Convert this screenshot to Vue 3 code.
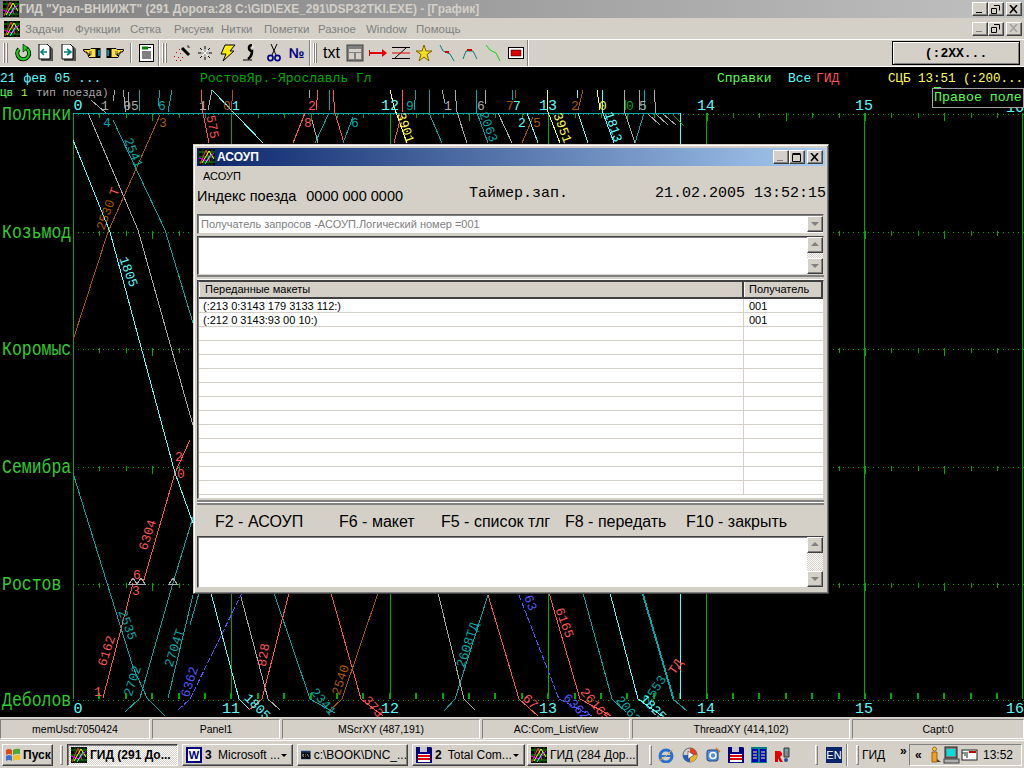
<script setup>
const C = {
  teal: "#00aaaa",
  cyan: "#55ffff",
  gray: "#aaaaaa",
  red: "#ff5555",
  orange: "#aa5500",
  yellow: "#ffff55",
  blue: "#5555ff",
  green: "#00aa00",
};

const menuItems = [
  { t: "Задачи", w: 50 },
  { t: "Функции", w: 55 },
  { t: "Сетка", w: 44 },
  { t: "Рисуем", w: 47 },
  { t: "Нитки", w: 43 },
  { t: "Пометки", w: 54 },
  { t: "Разное", w: 48 },
  { t: "Window", w: 50 },
  { t: "Помощь", w: 50 },
];

const stations = [
  { name: "Полянки", y: 113 },
  { name: "Козьмод", y: 231 },
  { name: "Коромыс", y: 348 },
  { name: "Семибра", y: 466 },
  { name: "Ростов", y: 583 },
  { name: "Деболов", y: 699 },
];

const hourX = [73, 231, 390, 548, 706, 864, 1022];

// ticks every 10 min, longer on the half hour
let tickPath = "";
let thickPath = "";
for (const s of stations) {
  for (let k = 1; k < 36; k++) {
    const x = Math.round(73 + 26.4 * k);
    if (s.y === 699) thickPath += `M${x} 693V699`;
    else tickPath += `M${x} ${s.y}v${k % 3 === 0 ? 8 : 5}`;
  }
}

const lines = [
  // left of the dialog
  [C.gray, "88,113 138,230 183,390 193,425"],
  [C.teal, "113,120 165,230 193,323"],
  [C.cyan, "73,140 110,232 175,473 193,523"],
  [C.orange, "73,340 108,232 160,115"],
  [C.red, "190,440 175,473 143,583"],
  [C.red, "103,698 133,583"],
  [C.teal, "73,473 107,583 133,667 147,698 165,716"],
  [C.teal, "140,698 173,583 193,517"],
  [C.teal, "168,698 193,595"],
  [C.teal, "140,698 125,712"],
  // below the dialog
  [C.teal, "190,625 199,593"],
  [C.cyan, "211,593 239,699 250,710"],
  [C.gray, "241,597 268,699 280,710"],
  [C.teal, "274,593 310,699 335,713"],
  [C.red, "289,593 262,699 249,710"],
  [C.red, "331,593 361,699 383,716"],
  [C.orange, "378,593 342,699 328,712"],
  [C.gray, "438,593 464,699 475,710"],
  [C.teal, "488,595 455,699 444,711"],
  [C.red, "488,595 519,699 538,716"],
  [C.red, "549,593 580,699 611,716"],
  [C.teal, "583,593 612,699 626,712"],
  [C.cyan, "610,593 638,699 662,716"],
  [C.teal, "642,593 673,699 687,711"],
  [C.teal, "643,593 674,699"],
  [C.cyan, "680,113 680,699"],
  // between the axis and the dialog top
  [C.red, "201,90 203,113 209,143"],
  [C.gray, "212,90 208,110"],
  [C.cyan, "212,90 263,143"],
  [C.orange, "233,90 231,112"],
  [C.red, "293,143 305,113"],
  [C.red, "318,90 316,110"],
  [C.gray, "309,90 309,98"],
  [C.gray, "312,120 318,143"],
  [C.teal, "330,90 329,110"],
  [C.teal, "329,113 315,143"],
  [C.red, "333,90 335,113 344,143"],
  [C.teal, "353,117 343,143"],
  [C.yellow, "390,90 394,107 407,143"],
  [C.red, "403,90 402,113 394,143"],
  [C.teal, "416,90 414,110"],
  [C.teal, "429,90 429,113 442,143"],
  [C.gray, "442,90 445,103"],
  [C.gray, "455,90 457,112 467,143"],
  [C.teal, "476,90 477,113 488,143"],
  [C.gray, "485,90 485,104"],
  [C.gray, "498,113 512,143"],
  [C.teal, "512,90 512,100"],
  [C.orange, "515,90 515,98"],
  [C.yellow, "547,90 548,112 560,143"],
  [C.orange, "533,117 522,143"],
  [C.cyan, "527,113 538,143"],
  [C.cyan, "577,90 577,98"],
  [C.orange, "583,90 578,110"],
  [C.cyan, "578,113 588,143"],
  [C.yellow, "597,90 600,110"],
  [C.cyan, "602,90 603,113 614,143"],
  [C.green, "624,90 626,110"],
  [C.gray, "624,90 624,110 635,143"],
  [C.teal, "644,113 635,143"],
  [C.gray, "639,90 639,110"],
  [C.teal, "644,90 644,110"],
  [C.gray, "654,90 656,113"],
  [C.gray, "648,114 660,125"],
  [C.gray, "656,114 668,125"],
  [C.gray, "663,114 676,125"],
  [C.green, "673,115 684,126"],
  // top strip, above the axis
  [C.gray, "115,90 113,101"],
  [C.gray, "123,90 126,112"],
  [C.teal, "140,90 139,112"],
  [C.teal, "160,90 158,106"],
  [C.teal, "172,90 168,112"],
  [C.gray, "91,100 106,113"],
  [C.gray, "128,92 128,110"],
];

const dashed = [
  [C.blue, "242,593 190,699 178,710"],
  [C.blue, "519,595 559,699 592,716"],
];

const hourLabels = [
  ["0", 78, 110],
  ["12", 390, 110],
  ["13", 548, 110],
  ["14", 706, 110],
  ["15", 864, 110],
  ["16", 1015, 112],
  ["0", 78, 713],
  ["11", 231, 713],
  ["12", 390, 713],
  ["13", 548, 713],
  ["14", 706, 713],
  ["15", 864, 713],
  ["16", 1015, 713],
];

const shortLabels = [
  ["1", 105, 110, C.gray],
  ["05", 131, 110, C.gray],
  ["6", 162, 110, C.teal],
  ["1", 203, 110, C.gray],
  ["0", 227, 110, C.orange],
  ["1", 236, 110, C.cyan],
  ["2", 312, 110, C.red],
  ["9", 410, 110, C.teal],
  ["1", 448, 110, C.gray],
  ["6", 481, 110, C.gray],
  ["7", 510, 110, C.orange],
  ["7", 517, 110, C.cyan],
  ["2", 575, 110, C.orange],
  ["0", 603, 110, C.yellow],
  ["0", 630, 110, C.green],
  ["5", 643, 110, C.gray],
  ["4", 107, 127, C.teal],
  ["3", 163, 127, C.orange],
  ["8", 308, 127, C.red],
  ["6", 355, 127, C.teal],
  ["2", 522, 127, C.cyan],
  ["5", 537, 127, C.orange],
  ["6", 137, 579, C.red],
  ["3", 136, 595, C.red],
  ["2", 179, 461, C.red],
  ["0", 181, 478, C.red],
  ["1", 98, 696, C.red],
];

const angled = [
  ["2541", 133, 153, 68, C.teal],
  ["2530", 106, 215, -70, C.orange],
  ["Т", 115, 192, -70, C.red],
  ["1805", 128, 272, 70, C.cyan],
  ["575", 212, 127, 80, C.red],
  ["3901", 405, 128, 72, C.yellow],
  ["2063", 488, 127, 70, C.teal],
  ["3951", 562, 128, 70, C.yellow],
  ["1813", 613, 127, 72, C.cyan],
  ["6304", 148, 535, -72, C.red],
  ["6162", 107, 651, -72, C.red],
  ["2535", 127, 625, 70, C.teal],
  ["2702", 133, 681, -72, C.teal],
  ["2704Т", 175, 648, -72, C.teal],
  ["6362", 190, 682, -72, C.blue],
  ["828", 264, 655, -80, C.red],
  ["2540", 341, 680, -72, C.orange],
  ["2341", 323, 702, 50, C.teal],
  ["1805", 257, 707, 45, C.cyan],
  ["373", 373, 707, 50, C.red],
  ["2608ТД", 468, 645, -72, C.teal],
  ["63", 530, 603, 70, C.blue],
  ["6165", 564, 623, 70, C.red],
  ["67", 530, 702, 45, C.red],
  ["6362", 576, 707, 45, C.blue],
  ["26165", 595, 705, 50, C.red],
  ["2063", 628, 710, 50, C.teal],
  ["2553", 655, 690, -55, C.teal],
  ["ТД", 676, 667, -55, C.red],
  ["1825", 653, 708, 45, C.cyan],
];

const rows = [
  { msg: "(:213 0:3143 179 3133 112:)", to: "001" },
  { msg: "(:212 0 3143:93 00 10:)", to: "001" },
  ...Array.from({ length: 12 }, () => ({ msg: "", to: "" })),
];

const fkeys = [
  { t: "F2 - АСОУП", w: 124 },
  { t: "F6 - макет", w: 102 },
  { t: "F5 - список тлг", w: 124 },
  { t: "F8 - передать", w: 121 },
  { t: "F10 - закрыть", w: 110 },
];

const statusPanels = [
  { t: "memUsd:7050424", w: 150 },
  { t: "Panel1", w: 128 },
  { t: "MScrXY (487,191)", w: 198 },
  { t: "AC:Com_ListView", w: 148 },
  { t: "ThreadXY (414,102)", w: 218 },
  { t: "Capt:0", w: 172 },
];
</script>

<template>
  <div class="screen">
    <svg class="defs" width="0" height="0">
      <symbol id="gid" viewBox="0 0 16 16">
        <rect width="16" height="16" fill="#000" />
        <path d="M0 3H16M0 8H16M0 13H16" stroke="#0a0" />
        <path d="M4 0V16M9 0V16M13 0V16" stroke="#060" />
        <path d="M1 15L7 1L11 13" stroke="#f33" fill="none" />
        <path d="M3 14L10 2L15 10" stroke="#ff0" fill="none" />
        <path d="M0 9L8 12L15 4" stroke="#f0f" fill="none" />
        <path d="M6 15L12 5" stroke="#3ff" fill="none" />
      </symbol>
      <symbol id="floppy" viewBox="0 0 16 16">
        <path d="M0 0H15L16 1V16H0Z" fill="#000080" />
        <rect x="4" y="0" width="7" height="5" fill="#c8c8c8" />
        <rect x="2" y="7" width="12" height="8" fill="#fff" />
        <path d="M2 9H14M2 12H14" stroke="#e00000" stroke-width="2" />
      </symbol>
    </svg>

    <div class="title-bar">
      <svg class="ic16" width="16" height="16"><use href="#gid" /></svg>
      <span class="title-text">ГИД "Урал-ВНИИЖТ" (291 Дорога:28 C:\GID\EXE_291\DSP32TKI.EXE) - [График]</span>
      <div class="win-btns">
        <button class="cap"><svg width="10" height="9"><path d="M1 7H7V8H1Z" fill="#000" /></svg></button>
        <button class="cap">
          <svg width="10" height="9"><path d="M3 .5H8.5V5.5M.5 3.5H5.5V8.5H.5Z" fill="none" stroke="#000" /></svg>
        </button>
        <button class="cap gap">
          <svg width="10" height="9"><path d="M1 0L8 8M8 0L1 8" stroke="#000" stroke-width="1.6" /></svg>
        </button>
      </div>
    </div>

    <div class="menu-bar">
      <svg class="menu-icon" width="16" height="16"><use href="#gid" /></svg>
      <span v-for="m in menuItems" :key="m.t" class="menu-item" :style="{ width: m.w + 'px' }">{{ m.t }}</span>
      <div class="win-btns">
        <button class="cap"><svg width="10" height="9"><path d="M1 7H7V8H1Z" fill="#808080" /></svg></button>
        <button class="cap">
          <svg width="10" height="9"><path d="M3 .5H8.5V5.5M.5 3.5H5.5V8.5H.5Z" fill="none" stroke="#000" /></svg>
        </button>
        <button class="cap gap">
          <svg width="10" height="9"><path d="M1 0L8 8M8 0L1 8" stroke="#a0a0a0" stroke-width="1.6" /></svg>
        </button>
      </div>
    </div>

    <div class="tool-bar">
      <div class="band band-1">
        <i class="handle"></i>
        <span class="tool">
          <svg width="18" height="18" viewBox="0 0 18 18">
            <path d="M5 5A6 6 0 1 0 12 4" fill="none" stroke="#000" stroke-width="4" />
            <path d="M5 5A6 6 0 1 0 12 4" fill="none" stroke="#10d010" stroke-width="2.4" />
            <path d="M9 0L14 4L9 8Z" fill="#10d010" stroke="#000" stroke-width=".6" />
          </svg>
        </span>
        <span class="tool">
          <svg width="18" height="18" viewBox="0 0 18 18">
            <path d="M4 2H13L16 5V17H4Z" fill="#555" />
            <path d="M2 0H10L13 3V15H2Z" fill="#fff" stroke="#000" />
            <path d="M10 8H5M7 5L4 8L7 11" fill="none" stroke="#008080" stroke-width="1.6" />
          </svg>
        </span>
        <span class="tool">
          <svg width="18" height="18" viewBox="0 0 18 18">
            <path d="M4 2H13L16 5V17H4Z" fill="#555" />
            <path d="M2 0H10L13 3V15H2Z" fill="#fff" stroke="#000" />
            <path d="M4 8H10M7 5L11 8L7 11" fill="none" stroke="#008080" stroke-width="1.6" />
          </svg>
        </span>
        <span class="tool">
          <svg width="18" height="14" viewBox="0 0 18 14">
            <path d="M.5 3.5H7L8 2.5H13V11.5H6L5 9.5H7V8H4V6H1.5V5H.5Z" fill="#ffe040" stroke="#000" />
            <path d="M6 6H9M6 8H9" stroke="#000" stroke-width=".6" />
            <rect x="13" y="2" width="4.5" height="10" fill="#000" />
            <rect x="15" y="4" width="2" height="6" fill="#0080a0" />
          </svg>
        </span>
        <span class="tool">
          <svg width="18" height="14" viewBox="0 0 18 14">
            <path d="M17.5 3.5H11L10 2.5H5V11.5H12L13 9.5H11V8H14V6H16.5V5H17.5Z" fill="#ffe040" stroke="#000" />
            <path d="M12 6H9M12 8H9" stroke="#000" stroke-width=".6" />
            <rect x=".5" y="2" width="4.5" height="10" fill="#000" />
            <rect x="1" y="4" width="2" height="6" fill="#0080a0" />
          </svg>
        </span>
        <i class="sep"></i>
        <span class="tool">
          <svg width="15" height="18" viewBox="0 0 15 18">
            <rect x=".5" y=".5" width="14" height="17" fill="#fff" stroke="#000" />
            <path d="M3 4H9" stroke="#008000" stroke-width="3" />
            <path d="M9 3.5H12" stroke="#000" />
            <path d="M3 8H12M3 10H12M3 12H12M3 14H12" stroke="#000" />
          </svg>
        </span>
      </div>
      <div class="band band-2">
        <i class="handle"></i>
        <span class="tool">
          <svg width="18" height="18" viewBox="0 0 18 18">
            <path d="M9 4L16 11" stroke="#000" stroke-width="3" />
            <path d="M14 3L15 1L17 4" stroke="#888" />
            <path d="M6 5h1v1H6ZM3 8h1v1H3ZM7 9h1v1H7ZM1 12h1v1H1ZM5 13h1v1H5ZM9 13h1v1H9ZM3 16h1v1H3ZM7 16h1v1H7Z" fill="#d00000" />
          </svg>
        </span>
        <span class="tool">
          <svg width="16" height="16" viewBox="0 0 16 16">
            <path d="M8 1V15M1 8H15M3 3L13 13M13 3L3 13" stroke="#000" />
            <path d="M8 4V12M4 8H12M5 5L11 11M11 5L5 11" stroke="#fff" />
          </svg>
        </span>
        <span class="tool">
          <svg width="18" height="18" viewBox="0 0 18 18">
            <path d="M6 1H16L11 7H15L4 17L7 10H2Z" fill="#ffee00" stroke="#000" />
          </svg>
        </span>
        <span class="tool">
          <svg width="16" height="18" viewBox="0 0 16 18">
            <path d="M9 1C5 1 5 7 9 7C9 10 8 13 5 15" fill="none" stroke="#000" stroke-width="2.6" />
            <path d="M0 16H9" stroke="#000" />
            <path d="M9 3L11 3" stroke="#fff" />
          </svg>
        </span>
        <span class="tool">
          <svg width="14" height="18" viewBox="0 0 14 18">
            <path d="M4 0L9 11M10 0L5 11" stroke="#000" />
            <circle cx="3.5" cy="14" r="2.6" fill="none" stroke="#000080" stroke-width="1.6" />
            <circle cx="10.5" cy="14" r="2.6" fill="none" stroke="#000080" stroke-width="1.6" />
          </svg>
        </span>
        <span class="tool numero">№</span>
      </div>
      <div class="band band-3">
        <i class="handle"></i>
        <span class="tool txt">txt</span>
        <span class="tool">
          <svg width="18" height="18" viewBox="0 0 18 18">
            <rect x="1" y="1" width="16" height="16" fill="#808080" stroke="#404040" />
            <rect x="3" y="5" width="12" height="3" fill="#d4d0c8" />
            <rect x="3" y="9" width="5" height="6" fill="#d4d0c8" />
            <rect x="10" y="9" width="5" height="6" fill="#d4d0c8" />
          </svg>
        </span>
        <span class="tool">
          <svg width="18" height="10" viewBox="0 0 18 10">
            <path d="M0 5H14" stroke="#e00000" stroke-width="2" />
            <path d="M13 1L18 5L13 9Z" fill="#e00000" />
            <path d="M.5 2V8" stroke="#e00000" />
          </svg>
        </span>
        <span class="tool">
          <svg width="18" height="12" viewBox="0 0 18 12">
            <path d="M0 .5H18M0 11.5H18" stroke="#000" />
            <path d="M14 1L3 11" stroke="#000" stroke-width="1" />
            <path d="M0 6H18" stroke="#e00000" />
          </svg>
        </span>
        <span class="tool">
          <svg width="18" height="18" viewBox="0 0 18 18">
            <path d="M9 1L11 7H17L12 10.5L14 17L9 13L4 17L6 10.5L1 7H7Z" fill="#f0e020" stroke="#806000" />
          </svg>
        </span>
        <span class="tool">
          <svg width="16" height="18" viewBox="0 0 16 18">
            <path d="M1 1L4 7L11 10L15 17" fill="none" stroke="#008080" />
            <path d="M6 8H10" stroke="#e00000" stroke-width="2" />
          </svg>
        </span>
        <span class="tool">
          <svg width="16" height="12" viewBox="0 0 16 12">
            <path d="M1 12L4 4H11L15 12" fill="none" stroke="#008080" />
            <path d="M5 3H10" stroke="#e00000" stroke-width="2" />
          </svg>
        </span>
        <span class="tool">
          <svg width="16" height="18" viewBox="0 0 16 18">
            <path d="M1 1L5 6L11 9L15 17" fill="none" stroke="#10d010" />
          </svg>
        </span>
        <span class="tool">
          <svg width="16" height="12" viewBox="0 0 16 12">
            <rect x=".5" y=".5" width="15" height="11" fill="#fff" stroke="#000" />
            <rect x="3" y="3" width="10" height="6" fill="#e00000" stroke="#000" stroke-width=".5" />
          </svg>
        </span>
      </div>
      <button class="query-btn">(:2XX...</button>
    </div>

    <div class="chart">
      <svg class="plot" width="1024" height="650" viewBox="0 67 1024 650" shape-rendering="crispEdges">
        <text class="hdr" x="0" y="82" :fill="C.cyan">21 фев 05 ...</text>
        <text class="hdr" x="200" y="82" fill="#00aa00">РостовЯр.-Ярославль Гл</text>
        <text class="hdr" x="717" y="82" fill="#55ff55">Справки</text>
        <text class="hdr" x="788" y="82" :fill="C.cyan">Все</text>
        <text class="hdr" x="816" y="82" :fill="C.red">ГИД</text>
        <text class="hdr tight" x="888" y="82" :fill="C.yellow">СЦБ 13:51 (:200...</text>
        <text class="sub" x="0" y="96" fill="#55ff55">Цв</text>
        <text class="sub" x="21" y="96" fill="#aaff55">1</text>
        <text class="sub" x="36" y="96" fill="#aaaaaa">тип поезда)</text>
        <path d="M934 87.5H941" stroke="#55ff55" />

        <path v-for="x in hourX" :key="x" :d="`M${x} 113V699`" stroke="#00aa00" />
        <path :d="tickPath" stroke="#00aa00" fill="none" />
        <path :d="thickPath" stroke="#00aa00" stroke-width="2" fill="none" />
        <path
          v-for="s in stations"
          :key="s.name"
          :d="`M73 ${s.y + 1}H1024`"
          stroke="#00aa00"
          stroke-dasharray="1 4"
        />
        <path d="M73 113H681" stroke="#00aaaa" />

        <polyline v-for="(l, i) in lines" :key="i" :points="l[1]" :stroke="l[0]" fill="none" />
        <polyline
          v-for="(l, i) in dashed"
          :key="'d' + i"
          :points="l[1]"
          :stroke="l[0]"
          stroke-dasharray="6 2"
          fill="none"
        />
        <path d="M133 578L129 584H137ZM141 578L137 584H145ZM173 578L169 584H177Z" fill="none" stroke="#aaaaaa" />

        <g shape-rendering="auto">
          <text
            v-for="s in stations"
            :key="'n' + s.name"
            class="station"
            :transform="`translate(2 ${s.y + 7}) scale(1 1.18)`"
          >{{ s.name }}</text>
          <text
            v-for="(l, i) in hourLabels"
            :key="'h' + i"
            class="hour"
            :x="l[1]"
            :y="l[2]"
            text-anchor="middle"
          >{{ l[0] }}</text>
          <text
            v-for="(l, i) in shortLabels"
            :key="'s' + i"
            class="tag"
            :x="l[1]"
            :y="l[2]"
            :fill="l[3]"
            text-anchor="middle"
          >{{ l[0] }}</text>
          <text
            v-for="(a, i) in angled"
            :key="'a' + i"
            class="tag"
            :fill="a[4]"
            text-anchor="middle"
            dominant-baseline="central"
            :transform="`translate(${a[1]} ${a[2]}) rotate(${a[3]})`"
          >{{ a[0] }}</text>
        </g>
      </svg>

      <div class="right-field">Правое поле</div>

      <div class="dialog">
        <div class="dlg-title">
          <svg width="16" height="16"><use href="#gid" /></svg>
          <b>АСОУП</b>
          <div class="dlg-btns">
            <button class="cap"><svg width="10" height="9"><path d="M1 7H7V8H1Z" fill="#808080" /></svg></button>
            <button class="cap">
              <svg width="10" height="9"><path d="M.5 1.5H8.5V8.5H.5ZM.5 .5H8.5" fill="none" stroke="#000" /></svg>
            </button>
            <button class="cap gap">
              <svg width="10" height="9"><path d="M1 0L8 8M8 0L1 8" stroke="#000" stroke-width="1.6" /></svg>
            </button>
          </div>
        </div>
        <div class="dlg-menu">АСОУП</div>
        <div class="dlg-info">
          <span class="idx">Индекс поезда</span>
          <span class="idx num">0000 000 0000</span>
          <span class="mono timer">Таймер.зап.</span>
          <span class="mono stamp">21.02.2005 13:52:15</span>
        </div>
        <div class="combo">
          <span>Получатель запросов -АСОУП.Логический номер =001</span>
          <span class="sbtn down"></span>
        </div>
        <div class="memo memo-top">
          <div class="vscroll">
            <span class="sbtn up"></span>
            <span class="strack"></span>
            <span class="sbtn down"></span>
          </div>
        </div>
        <div class="splitter"></div>
        <div class="list">
          <div class="list-head">
            <span class="h1">Переданные макеты</span>
            <span class="h2">Получатель</span>
          </div>
          <div v-for="(r, i) in rows" :key="i" class="list-row">
            <span class="c1">{{ r.msg }}</span>
            <span class="c2">{{ r.to }}</span>
          </div>
        </div>
        <div class="splitter low"></div>
        <div class="fkeys">
          <span v-for="f in fkeys" :key="f.t" :style="{ width: f.w + 'px' }">{{ f.t }}</span>
        </div>
        <div class="memo memo-bot">
          <div class="vscroll">
            <span class="sbtn up"></span>
            <span class="strack"></span>
            <span class="sbtn down"></span>
          </div>
        </div>
      </div>
    </div>

    <div class="status-bar">
      <span v-for="p in statusPanels" :key="p.t" class="panel" :style="{ width: p.w + 'px' }">{{ p.t }}</span>
    </div>

    <div class="task-bar">
      <button class="start">
        <svg width="16" height="16" viewBox="0 0 16 16">
          <path d="M1 3Q4 1 7 3V8Q4 6 1 8Z" fill="#e04818" />
          <path d="M8 3Q11 1 15 2V7Q11 6 8 8Z" fill="#48a830" />
          <path d="M1 9Q4 7 7 9V14Q4 12 1 14Z" fill="#3870d8" />
          <path d="M8 9Q11 7 15 8V13Q11 12 8 14Z" fill="#f0c020" />
        </svg>
        <b>Пуск</b>
      </button>
      <i class="tb-handle first"></i>
      <button class="task active">
        <svg width="16" height="16"><use href="#gid" /></svg>
        <b>ГИД (291 До...</b>
      </button>
      <button class="task">
        <span class="word-ic">W</span>
        <span class="cnt">3</span> Microsoft ...
        <i class="caret"></i>
      </button>
      <button class="task">
        <svg width="16" height="14" viewBox="0 0 16 14">
          <rect width="16" height="14" fill="#1a3a6a" />
          <rect x="1" y="3" width="14" height="10" fill="#000" />
          <path d="M3 6H5M3 6V9H5M7 6h1M7 9h1M10 5L13 10" stroke="#fff" fill="none" />
        </svg>
        <span>c:\BOOK\DNC_...</span>
      </button>
      <button class="task tc">
        <svg width="16" height="16"><use href="#floppy" /></svg>
        <span class="cnt">2</span> Total Com...
        <i class="caret"></i>
      </button>
      <button class="task">
        <svg width="16" height="16"><use href="#gid" /></svg>
        <span>ГИД (284 Дор...</span>
      </button>
      <i class="tb-handle before-quick"></i>
      <div class="quick">
        <svg width="17" height="16" viewBox="0 0 17 16">
          <circle cx="8" cy="9" r="6" fill="none" stroke="#2a70d0" stroke-width="3" />
          <path d="M3 9H14" stroke="#2a70d0" stroke-width="2" />
          <path d="M1 14Q8 10 15 2" fill="none" stroke="#f0b030" />
        </svg>
        <svg width="16" height="16" viewBox="0 0 16 16">
          <circle cx="8" cy="8" r="7" fill="#d0d0d0" stroke="#606060" />
          <path d="M8 8V1A7 7 0 0 1 15 8Z" fill="#e04020" />
          <path d="M8 8H15A7 7 0 0 1 8 15Z" fill="#f0b020" />
          <path d="M8 8V15A7 7 0 0 1 1 8Z" fill="#2060c0" />
          <path d="M6 4L12 8L6 12Z" fill="#fff" stroke="#404040" stroke-width=".6" />
        </svg>
        <svg width="16" height="16" viewBox="0 0 16 16">
          <rect x="2" y="3" width="11" height="11" rx="2" fill="#5090e0" stroke="#204080" />
          <circle cx="8" cy="8.5" r="3" fill="none" stroke="#fff" stroke-width="1.6" />
          <path d="M11 1L15 5" stroke="#e07020" stroke-width="1.5" />
        </svg>
        <svg width="16" height="16"><use href="#floppy" /></svg>
        <svg width="16" height="16" viewBox="0 0 16 16">
          <rect width="16" height="16" fill="#008080" />
          <rect x="1" y="2" width="6" height="13" fill="#0000c0" />
          <rect x="9" y="2" width="6" height="13" fill="#0000c0" />
          <path d="M2 5H6M2 8H6M2 11H6M10 5H14M10 8H14M10 11H14" stroke="#ffff55" />
        </svg>
        <svg width="16" height="16" viewBox="0 0 16 16">
          <path d="M10 1H15V10H10Z" fill="#808890" stroke="#303840" />
          <path d="M11 3H14" stroke="#40d0e0" />
          <path d="M1 4H6L8 6V8L6 10L9 15H6L4 11V15H1Z" fill="#e00000" />
          <circle cx="12" cy="13" r="2" fill="#2050a0" />
        </svg>
      </div>
      <i class="tb-handle"></i>
      <span class="lang">EN</span>
      <i class="tb-groove"></i>
      <i class="tb-handle small"></i>
      <span class="gid-band">ГИД</span>
      <b class="chev">»</b>
      <div class="tray">
        <b class="chev-l">«</b>
        <svg width="16" height="18" viewBox="0 0 16 18">
          <path d="M5 6H10V16H5Z" fill="#f0a020" stroke="#804000" stroke-width=".7" />
          <circle cx="7.5" cy="3" r="2" fill="#f0d040" stroke="#804000" stroke-width=".7" />
          <path d="M10 13L14 16H10Z" fill="#404040" />
        </svg>
        <svg width="18" height="18" viewBox="0 0 18 18">
          <rect x="2" y="1" width="12" height="11" fill="#808080" stroke="#202020" />
          <rect x="4" y="3" width="8" height="7" fill="#00e0e0" />
          <rect x="1" y="13" width="15" height="4" fill="#b0b0b0" stroke="#404040" />
        </svg>
        <svg width="17" height="12" viewBox="0 0 17 12">
          <rect x="1" y="1" width="15" height="10" fill="#fff" stroke="#202020" />
          <rect x="8" y="2" width="7" height="2" fill="#c00000" />
          <path d="M1 4H7M3 6H7M5 8H7" stroke="#202020" />
        </svg>
        <span class="clock">13:52</span>
      </div>
    </div>
  </div>
</template>

<style>
html,
body {
  margin: 0;
  overflow: hidden;
  background: #000;
}
</style>

<style scoped>
.screen {
  width: 1024px;
  height: 768px;
  display: flex;
  flex-direction: column;
  font-family: "Liberation Sans", Arial, sans-serif;
  font-size: 11px;
  color: #000;
  overflow: hidden;
}

.defs {
  position: absolute;
}

button {
  font-family: inherit;
  padding: 0;
  margin: 0;
  color: #000;
}

.title-bar {
  height: 18px;
  flex: none;
  display: flex;
  align-items: center;
  padding-left: 3px;
  background: linear-gradient(90deg, #808080, #c0c0c0);
}

.title-text {
  font-weight: bold;
  font-size: 11.9px;
  color: #d4d0c8;
  white-space: nowrap;
}

.win-btns {
  margin-left: auto;
  margin-right: 2px;
  display: flex;
}

.cap {
  width: 16px;
  height: 14px;
  display: flex;
  align-items: center;
  justify-content: center;
  background: #d4d0c8;
  border: 1px solid;
  border-color: #fff #404040 #404040 #fff;
  box-shadow: inset -1px -1px #808080;
}

.cap.gap {
  margin-left: 2px;
}

.menu-bar {
  height: 21px;
  flex: none;
  display: flex;
  align-items: center;
  background: #d4d0c8;
  padding-left: 4px;
}

.menu-icon {
  margin-right: 5px;
}

.menu-item {
  color: #808080;
  font-size: 11.5px;
}

.tool-bar {
  height: 26px;
  flex: none;
  display: flex;
  align-items: center;
  background: #d4d0c8;
  border-top: 1px solid #fff;
  border-bottom: 1px solid #fff;
  position: relative;
}

.band {
  height: 100%;
  display: flex;
  align-items: center;
  border-right: 1px solid #808080;
  box-shadow: 1px 0 #fff;
  box-sizing: border-box;
  padding-left: 3px;
}

.band-1 {
  width: 159px;
}

.band-2 {
  width: 151px;
}

.band-3 {
  width: 218px;
}

.handle {
  width: 5px;
  height: 20px;
  margin-right: 3px;
  border-left: 1px solid #fff;
  border-right: 1px solid #808080;
  box-sizing: border-box;
  box-shadow: inset 1px 0 #808080, inset -1px 0 #fff;
}

.tool {
  width: 23px;
  height: 22px;
  flex: none;
  display: flex;
  align-items: center;
  justify-content: center;
}

.sep {
  width: 2px;
  height: 20px;
  margin: 0 3px 0 4px;
  background: linear-gradient(90deg, #808080 50%, #fff 50%);
}

.numero {
  font-weight: bold;
  font-size: 14px;
  color: #000080;
}

.txt {
  font-size: 16px;
}

.query-btn {
  position: absolute;
  left: 892px;
  top: 1px;
  width: 128px;
  height: 24px;
  font-family: "Liberation Mono", monospace;
  font-size: 13px;
  font-weight: bold;
  background: #d4d0c8;
  border: 1px solid #000;
  box-shadow: inset 1px 1px #fff, inset -1px -1px #808080;
}

.chart {
  position: relative;
  flex: none;
  height: 650px;
  background: #000;
}

.plot {
  display: block;
}

.hdr {
  font-family: "Liberation Mono", monospace;
  font-size: 13px;
}

.hdr.tight {
  font-size: 12.5px;
}

.sub {
  font-family: "Liberation Mono", monospace;
  font-size: 11px;
}

.station {
  font-family: "Liberation Mono", monospace;
  font-size: 16.5px;
  fill: #30cc30;
}

.hour {
  font-family: "Liberation Mono", monospace;
  font-size: 15px;
  fill: #55ffff;
}

.tag {
  font-family: "Liberation Mono", monospace;
  font-size: 13px;
}

.right-field {
  position: absolute;
  left: 932px;
  top: 21px;
  width: 89px;
  height: 18px;
  border: 1px solid #a0a0a0;
  background: #000;
  color: #55ff55;
  font-family: "Liberation Mono", monospace;
  font-size: 13.3px;
  line-height: 18px;
  white-space: nowrap;
  padding-left: 1px;
}

/* АСОУП window */
.dialog {
  position: absolute;
  left: 193px;
  top: 77px;
  width: 636px;
  height: 450px;
  box-sizing: border-box;
  background: #d4d0c8;
  border: 1px solid;
  border-color: #d4d0c8 #404040 #404040 #d4d0c8;
  box-shadow: inset 1px 1px #fff, inset -1px -1px #808080;
  padding: 3px 4px 0 3px;
  display: flex;
  flex-direction: column;
}

.dlg-title {
  height: 18px;
  flex: none;
  margin-right: -1px;
  display: flex;
  align-items: center;
  gap: 2px;
  padding-left: 2px;
  background: linear-gradient(90deg, #0a246a, #a6caf0);
  color: #fff;
  font-size: 12px;
}

.dlg-btns {
  margin-left: auto;
  margin-right: 2px;
  display: flex;
}

.dlg-menu {
  height: 20px;
  line-height: 20px;
  padding-left: 6px;
  font-size: 11px;
  flex: none;
}

.dlg-info {
  height: 28px;
  flex: none;
  display: flex;
  align-items: flex-start;
  white-space: nowrap;
}

.idx {
  font-size: 14.5px;
  line-height: 20px;
}

.num {
  margin-left: 10px;
}

.mono {
  font-family: "Liberation Mono", monospace;
  font-size: 15px;
  line-height: 16px;
}

.timer {
  margin-left: 66px;
}

.stamp {
  margin-left: 87px;
}

.combo {
  height: 20px;
  flex: none;
  box-sizing: border-box;
  display: flex;
  align-items: center;
  justify-content: space-between;
  background: #fff;
  color: #808080;
  padding-left: 3px;
  border: 1px solid;
  border-color: #606060 #d4d0c8 #d4d0c8 #606060;
  box-shadow: inset 1px 1px #808080;
}

.memo {
  flex: none;
  box-sizing: border-box;
  background: #fff;
  border: 1px solid;
  border-color: #404040 #d4d0c8 #d4d0c8 #404040;
  box-shadow: inset 1px 1px #808080;
  display: flex;
  justify-content: flex-end;
}

.memo-top {
  margin-top: 2px;
  height: 39px;
}

.memo-bot {
  height: 52px;
}

.vscroll {
  width: 16px;
  display: flex;
  flex-direction: column;
}

.strack {
  flex: 1;
  background: repeating-conic-gradient(#fff 0 25%, #d4d0c8 0 50%) 0 0 / 2px 2px;
}

.sbtn {
  width: 16px;
  height: 16px;
  flex: none;
  box-sizing: border-box;
  position: relative;
  background: #d4d0c8;
  border: 1px solid;
  border-color: #fff #404040 #404040 #fff;
  box-shadow: inset -1px -1px #808080;
}

.sbtn::after {
  content: "";
  position: absolute;
  left: 3px;
  width: 0;
  height: 0;
  border-left: 4px solid transparent;
  border-right: 4px solid transparent;
}

.sbtn.up::after {
  top: 4px;
  border-bottom: 4px solid #808080;
}

.sbtn.down::after {
  top: 5px;
  border-top: 4px solid #808080;
}

.splitter {
  height: 5px;
  flex: none;
  box-sizing: border-box;
  border-top: 2px solid #808080;
  border-bottom: 1px solid #fff;
}

.splitter.low {
  height: 5px;
  margin-top: 1px;
  border-top: 2px solid #808080;
  border-bottom: 2px solid #808080;
  background: #fff;
}

.list {
  height: 219px;
  flex: none;
  box-sizing: border-box;
  background: #fff;
  border: 1px solid;
  border-color: #404040 #d4d0c8 #d4d0c8 #404040;
  box-shadow: inset 1px 1px #808080;
  padding-left: 1px;
  overflow: hidden;
}

.list-head {
  height: 15px;
  display: flex;
  background: #d4d0c8;
  border-top: 1px solid #404040;
  border-bottom: 2px solid #404040;
}

.h1 {
  width: 537px;
  padding-left: 5px;
  line-height: 14px;
  border-right: 2px solid #404040;
  border-left: 1px solid #fff;
}

.h2 {
  flex: 1;
  padding-left: 4px;
  line-height: 14px;
  border-right: 2px solid #404040;
  border-left: 1px solid #fff;
}

.list-row {
  height: 14px;
  box-sizing: border-box;
  display: flex;
  border-bottom: 1px solid #d4d0c8;
  line-height: 14px;
}

.c1 {
  width: 540px;
  padding-left: 4px;
  border-right: 1px solid #d4d0c8;
}

.c2 {
  padding-left: 5px;
}

.fkeys {
  height: 31px;
  flex: none;
  box-sizing: border-box;
  display: flex;
  align-items: center;
  padding: 3px 0 0 18px;
  font-size: 16px;
  white-space: nowrap;
}

.status-bar {
  height: 23px;
  flex: none;
  display: flex;
  background: #d4d0c8;
  border-top: 1px solid #d4d0c8;
  box-sizing: border-box;
}

.panel {
  box-sizing: border-box;
  height: 20px;
  margin-top: 1px;
  margin-right: 2px;
  text-align: center;
  font-size: 10.5px;
  line-height: 19px;
  border: 1px solid;
  border-color: #808080 #fff #fff #808080;
  flex: none;
}

.task-bar {
  height: 28px;
  flex: none;
  box-sizing: border-box;
  display: flex;
  align-items: center;
  background: #d4d0c8;
  border-top: 1px solid #fff;
  padding: 1px 0 0 2px;
}

.start {
  width: 51px;
  height: 22px;
  display: flex;
  align-items: center;
  gap: 2px;
  padding-left: 2px;
  font-size: 12px;
  background: #d4d0c8;
  border: 1px solid;
  border-color: #fff #404040 #404040 #fff;
  box-shadow: inset -1px -1px #808080;
}

.task {
  width: 111px;
  height: 22px;
  flex: none;
  margin-left: 4px;
  display: flex;
  align-items: center;
  gap: 3px;
  padding-left: 3px;
  font-size: 12px;
  white-space: pre;
  background: #d4d0c8;
  border: 1px solid;
  border-color: #fff #404040 #404040 #fff;
  box-shadow: inset -1px -1px #808080;
  position: relative;
}

.task.active {
  border-color: #404040 #fff #fff #404040;
  box-shadow: inset 1px 1px #808080;
  background: repeating-conic-gradient(#fff 0 25%, #d4d0c8 0 50%) 0 0 / 2px 2px;
}

.task.tc {
  width: 113px;
}

.task.tc + .task {
  margin-left: 2px;
}

.cnt {
  font-weight: bold;
}

.word-ic {
  width: 16px;
  height: 16px;
  box-sizing: border-box;
  background: #fff;
  border: 2px solid #000080;
  color: #000080;
  font-weight: bold;
  font-size: 11px;
  line-height: 12px;
  text-align: center;
}

.caret {
  position: absolute;
  right: 5px;
  top: 9px;
  border-left: 3px solid transparent;
  border-right: 3px solid transparent;
  border-top: 3px solid #000;
}

.tb-handle {
  width: 3px;
  height: 20px;
  flex: none;
  margin: 0 8px 0 10px;
  box-sizing: border-box;
  border: 1px solid;
  border-color: #fff #808080 #808080 #fff;
}

.tb-handle.first {
  margin: 0 0 0 7px;
}

.tb-handle.before-quick {
  margin: 0 6px 0 11px;
}

.tb-handle.small {
  margin: 0 3px 0 8px;
}

.quick {
  width: 147px;
  display: flex;
  align-items: center;
  gap: 7px;
}

.lang {
  width: 16px;
  height: 16px;
  flex: none;
  background: #0a246a;
  color: #fff;
  font-size: 11px;
  line-height: 16px;
  text-align: center;
}

.tb-groove {
  width: 2px;
  height: 22px;
  margin-left: 4px;
  background: linear-gradient(90deg, #808080 50%, #fff 50%);
}

.gid-band {
  width: 38px;
  font-size: 12px;
}

.chev {
  width: 9px;
  font-size: 12px;
  margin-top: -8px;
}

.tray {
  width: 113px;
  height: 22px;
  flex: none;
  box-sizing: border-box;
  display: flex;
  align-items: center;
  border: 1px solid;
  border-color: #808080 #fff #fff #808080;
  padding-left: 5px;
}

.chev-l {
  font-size: 12px;
  width: 12px;
}

.clock {
  margin-left: auto;
  margin-right: 8px;
  font-size: 12px;
}
</style>
